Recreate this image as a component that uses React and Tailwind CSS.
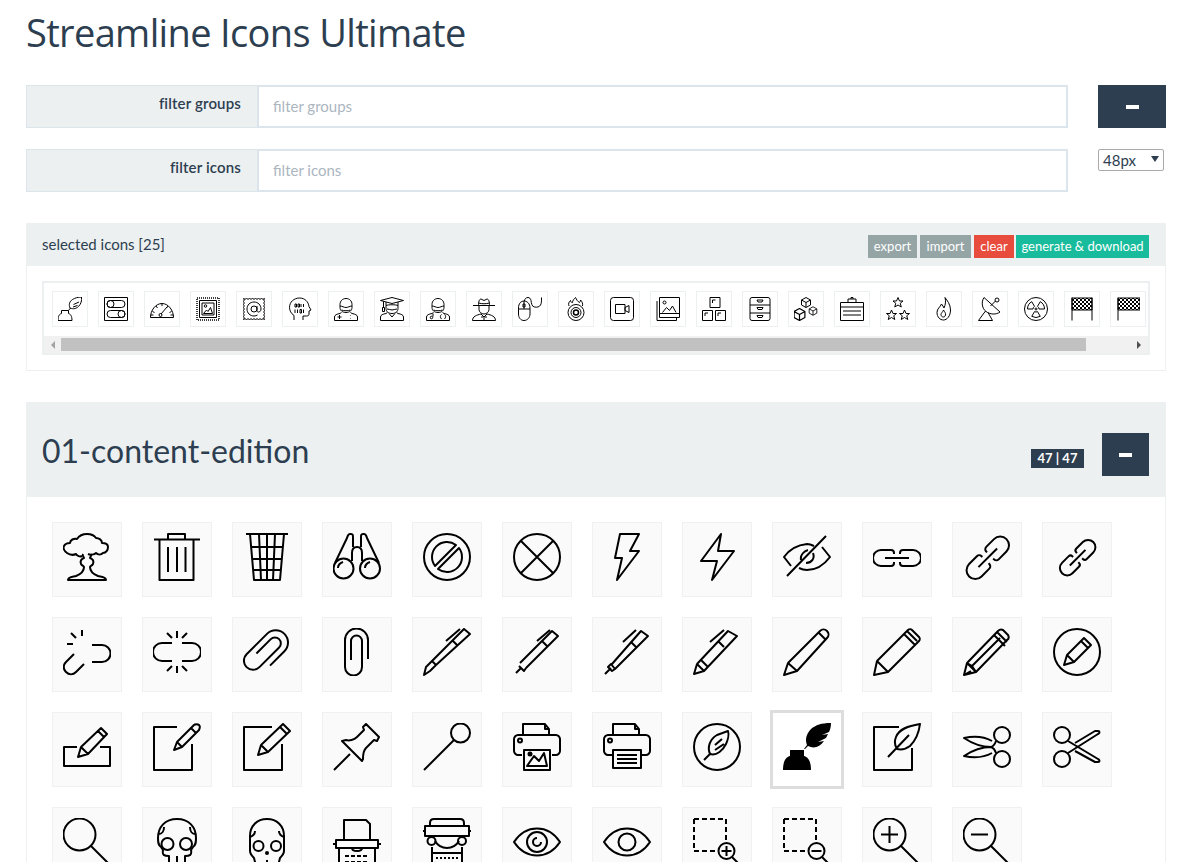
// Icon glyphs live in a 48x48 box, same drawings at 48px and 24px
const Glyph = ({ children, className }) => (
  <svg viewBox="0 0 48 48" fill="none" stroke="#000" strokeWidth="2" strokeLinecap="butt" strokeLinejoin="round" className={className}>
    {children}
  </svg>
)

const P = ({ d, ...rest }) => <path d={d} {...rest} />
const C = ({ x, y, r, ...rest }) => <circle cx={x} cy={y} r={r} {...rest} />

const linkBody = 'M21 21v-1a3 3 0 0 0-3-3H8a8 8 0 0 0 0 16h10a3 3 0 0 0 3-3v-1M27 21v-1a3 3 0 0 1 3-3h10a8 8 0 0 1 0 16H30a3 3 0 0 1-3-3v-1M12 25h24'
const clipBody = 'M35 31V12a11.5 11.5 0 0 0-23 0v27a8.5 8.5 0 0 0 17 0V13a5.5 5.5 0 0 0-11 0v19'
const eyeShape = 'M1 24C7 15 15 10.5 24 10.5S41 15 47 24c-6 9-14 13.5-23 13.5S7 33 1 24z'
const printerBase = 'M9 32H5c-2 0-4-2-4-4V16c0-2 2-4 4-4h38c2 0 4 2 4 4v12c0 2-2 4-4 4h-4M10 12V1h22l4 5v6M32 1v5h4'
const shoulders = 'M1 47v-7c0-4 5-6 11-7l3-2M47 47v-7c0-4-5-6-11-7l-3-2M1 47h46'
const faceOval = 'M24 3c-7 0-12 5-12 12v6c0 6 5 10 12 10s12-4 12-10v-6c0-7-5-12-12-12z'

function scallop() {
  let d = 'M3 3'
  for (let i = 0; i < 7; i++) d += 'q3 3 6 0'
  for (let i = 0; i < 7; i++) d += 'q-3 3 0 6'
  for (let i = 0; i < 7; i++) d += 'q-3 -3 -6 0'
  for (let i = 0; i < 7; i++) d += 'q3 -3 0 -6'
  return d + 'z'
}

const Star = ({ x, y }) => (
  <path transform={`translate(${x} ${y})`} d="M0-10l3 7h7l-5.500 4.500L6.500 9 0 5-6.500 9l2-7.500L-10-3h7z" />
)

const Cube = ({ x, y, s = 1 }) => (
  <g transform={`translate(${x} ${y}) scale(${s})`}>
    <path d="M0-10l9 5v10l-9 5-9-5V-5zM-9-5l9 5 9-5M0 0v10" />
  </g>
)

const Scene = () => (
  <path d="M14 43l7-10 5 5 5-8 3 13z" />
)

const selectedIcons = [
  <><P d="M7 27h14v6c4 1 7 5 7 14H0c0-9 3-13 7-14zM21 27l4-5" /><P d="M24 22c-3-7-1-13 5-17 5-3 11-5 18-5 1 7-1 14-6 19-4 4-10 6-17 3zM31 15l11-5M30 20l9-3" /></>,
  <><P d="M1 1h46v46H1zM13 7h22a7 7 0 0 1 0 14H13a7 7 0 0 1 0-14zM13 27h22a7 7 0 0 1 0 14H13a7 7 0 0 1 0-14z" /><C x="13" y="14" r="7" /><C x="35" y="34" r="7" /></>,
  <><P d="M1 41c0-14 10-28 23-28s23 14 23 28zM22 34l12-14M24 13v5M12 18l3 4M36 18l-3 4M5 29l4 2M43 29l-4 2M1 36h6M41 36h6" /><C x="21" y="36" r="3" /></>,
  <><P d="M2 2h44v44H2z" strokeDasharray="2 2" strokeWidth="3" /><P d="M7 7h34v34H7zM12 12h24v24H12z" /><C x="19" y="18" r="2.500" /><P d="M15 33l6-7 3 3 5-8 4 12z" /></>,
  <><P d={scallop()} /><C x="24" y="24" r="6" /><P d="M30 18v9c0 5 8 4 8-3 0-8-6-14-14-14s-14 6-14 14 6 14 14 14c3 0 5-1 7-2" /></>,
  <><P d="M12 46v-9C6 33 3 27 3 21 3 10 12 2 23 2s18 8 19 17l4 7-4 2v6c0 3-2 4-5 4h-7v8" /><P d="M14 14h3v6h-3zM20 14h3v6h-3zM26 14v6M31 14v6M14 25v7M19 25v7M24 25h3v7h-3zM31 25v7" /></>,
  <><P d={faceOval} /><P d="M12 18c4 0 8 3 12 3s8-3 12-3M15 26c5 2 13 2 18 0" /><P d={shoulders} /><P d="M11 36v8M7 40h8M33 37v1M33 42v1" /></>,
  <><P d="M1 7l23-6 23 6-23 6zM7 9v12M5 21h4v8H5zM12 10v7c4-2 20-2 24 0v-7" /><P d="M12 17v6c0 6 5 10 12 10s12-4 12-10v-6M14 24c4 0 7 2 10 2s6-2 10-2" /><P d={shoulders} /><P d="M18 33l6 7 6-7" /></>,
  <><P d={faceOval} /><P d="M12 18c4 0 8 3 12 3s8-3 12-3M15 26c5 2 13 2 18 0" /><P d={shoulders} /><C x="11" y="41" r="2.500" /><P d="M31 44c-3-3-3-7 0-9M37 44c3-3 3-7 0-9M14 33v6" /></>,
  <><P d="M2 17h44M13 17c0-6 1-13 5-13l6 3 6-3c4 0 5 7 5 13M13 12c7 2 15 2 22 0M14 17v8c0 5 5 9 10 9s10-4 10-9v-8" /><P d="M1 47c0-8 8-11 17-13l6 6 6-6c9 2 17 5 17 13zM24 40v7M18 40h4M26 40h4" /></>,
  <><P d="M1 22c0-9 5-14 11-14s12 5 12 14v12c0 7-5 13-12 13S1 41 1 34zM1 24h23M12 8v16M10 14h4v6h-4z" /><P d="M13 8c0-4 3-7 7-7 3 0 5 2 6 6 1 5 1 12 7 13 5 1 10 0 12-4 2-3 2-7 2-15" /></>,
  <><P d="M10 18c-2-5 0-8 3-11 0 3 2 4 4 4 0-4 3-7 6-10 2 4 4 8 8 10 1-1 2-3 2-5 3 3 5 7 4 12" /><C x="24" y="31" r="16" /><C x="24" y="31" r="10" /><C x="24" y="31" r="5" strokeWidth="3" /></>,
  <><P d="M7 1h34a6 6 0 0 1 6 6v34a6 6 0 0 1-6 6H7a6 6 0 0 1-6-6V7a6 6 0 0 1 6-6zM11 15h19v18H11zM30 21l8-4v14l-8-4z" /></>,
  <><P d="M7 1h40v40H7zM7 33h40M2 8v39h39v-6" /><C x="17" y="11" r="3" /><P d="M13 31l8-10 6 6 6-9 7 13" /></>,
  <><P d="M16 1h20v20H16zM1 27h20v20H1zM27 27h20v20H27zM21 12V6h6M6 38v-6h6M32 38v-6h6" /></>,
  <><P d="M8 1h32a4 4 0 0 1 4 4v38a4 4 0 0 1-4 4H8a4 4 0 0 1-4-4V5a4 4 0 0 1 4-4zM4 16h40M4 32h40M18 6h12l-2 4h-8zM18 21h12l-2 4h-8zM18 37h12l-2 4h-8z" /></>,
  <><Cube x={24} y={11} /><Cube x={11} y={35} s={1.200} /><Cube x={38} y={28} s={0.850} /></>,
  <><P d="M1 11h46v36H1zM16 11V4h16v7M22 4V1h4v3M1 20h46M6 28h36M6 36h36" /></>,
  <><Star x={24} y={11} /><Star x={11} y={36} /><Star x={37} y={36} /></>,
  <><P d="M26 1c4 6 11 13 11 25 0 12-7 20-14 20S10 40 10 31c0-8 6-10 9-17 2 3 4 5 5 8 3-6 4-14 2-21z" /><P d="M23 40c-3 0-5-2-5-5 0-3 3-4 5-9 2 4 5 6 4 10-1 3-2 4-4 4z" /></>,
  <><P d="M12 1c-6 9-4 22 4 28s20 7 28 1zM25 18l10-10M1 47l14-19M29 47L20 31M1 47h28" /><C x="38" y="6" r="4" /></>,
  <><C x="24" y="24" r="23" /><C x="24" y="24" r="2" /><P d="M27 18.800L32.500 9.300A17 17 0 0 1 41 24H30A6 6 0 0 0 27 18.800zM21 18.800L15.500 9.300A17 17 0 0 0 7 24H18A6 6 0 0 1 21 18.800zM27 29.200L32.500 38.700A17 17 0 0 1 15.500 38.700L21 29.200A6 6 0 0 0 27 29.200z" /></>,
  <><rect x="4" y="2" width="40" height="24" fill="url(#chk)" stroke="#000" /><P d="M4 1v46M44 1v46" /></>,
  <><rect x="4" y="2" width="44" height="24" fill="url(#chk)" stroke="#000" /><P d="M4 1v46" /></>,
]

const contentIcons = [
  // row 1
  <><P d="M19 23c-2 1-5 0-6-2-2 1-6 1-9-1-3-2-4-5-3-7 1-2 4-3 6-3 0-3 4-5 7-4 2-3 5-5 10-5s7 1 9 4c3 0 6 2 6 5 3 0 6 1 6 4s-2 6-5 6c-2 2-5 2-7 0-2 2-6 2-8 1" /><P d="M20 21c-1 2 1 3 1 4-3 1-4 3-3 6 1 2 3 2 3 3 0 4-3 7-8 9-4 1-8 1-8 4h38c0-3-4-3-8-4-5-2-8-5-8-9 0-1 2-1 3-3 1-3 0-5-3-6 0-1 2-2 1-4" /></>,
  <P d="M1 6.500h46M15 6.500V1h17v5.500M6.500 6.500V47h34V6.500M15 14v25M24 14v25M32.500 14v25" />,
  <P d="M3 1h42M7 1l4 46h26l4-46M16 1l2 46M24 1v46M32 1l-2 46M8 14h32M9 26h30M10 37h28" />,
  <><C x="10.500" y="35.500" r="10" /><C x="37" y="35.500" r="10" /><P d="M2 30L14 5c1-3 1-4 3-4h1c2 0 2 1 2 4v9M46 30L34 5c-1-3-1-4-3-4h-1c-2 0-2 1-2 4v9M19 28v-8c0-4 2-6 5-6s5 2 5 6v8M5 35c0-3 2-5 5-6M32 35c0-3 2-5 5-6" /></>,
  <><C x="24" y="24" r="23" /><P d="M12 33A15 15 0 0 1 33 12zM15 36A15 15 0 0 0 36 15z" /></>,
  <><C x="24" y="24" r="23" /><P d="M8 8l32 32M40 8L8 40" /></>,
  <P d="M17 1h19l-9 17h9L14 47l5-22h-7z" />,
  <P d="M28 1L8 28h16l-5 19 22-29H25z" />,
  <P d="M4 43L43 3M8 33l-7-9c5-7 13-12 23-13 3 0 5 1 7 2M39 14l8 10c-6 8-14 13-23 13-3 0-6-1-8-2M18 27c-1-5 3-9 7-10M30 20c2 5-1 10-7 10" />,
  <P d={linkBody} />,
  <g transform="translate(24 24) rotate(-45) scale(1.100) translate(-24 -24)" strokeWidth="1.800"><P d={linkBody} /></g>,
  <g transform="translate(24 24) rotate(-45) scale(0.920) translate(-24 -24)" strokeWidth="2.170"><P d={linkBody} /></g>,
  // row 2
  <P d="M11 26l-8 8c-3 3-3 7 0 10s7 3 10 0l8-8M29 17h10a8.500 8.500 0 0 1 0 17H29M19 2v6M8 5l5 5M4 16h6" />,
  <P d="M19 15H9a9 9 0 0 0 0 18h10M29 15h10a9 9 0 0 1 0 18H29M24 3v7M14 5l5 5M34 5l-5 5M24 38v7M14 43l5-5M34 43l-5-5" />,
  <g transform="translate(24 24) rotate(45) scale(1.070) translate(-24 -24)" strokeWidth="1.870"><P d={clipBody} /></g>,
  <P d={clipBody} />,
  <P d="M1 47l2-8 6-6 4 4-6 6zM9 33L41 1l6 5-34 31M30 13l5 5M23 13L37 1" />,
  <P d="M3 45l5-5M6 38l5 5 2-3M7 35L39 3l6 5L13 40M29 13l5 5M24 13L37 2" />,
  <P d="M2 46l6-6M5 39l4 4 3-2-4-5zM9 36L38 3l7 5L12 41M28 14l5 5M20 14L33 2" />,
  <P d="M1 46l3-10 7 7zM4 36L35 3l9 5L11 43M8 32l7 7M26 14l5 5M17 14L31 2" />,
  <P d="M1 47l4-12 9 8zM5 35L37 3c2-2 5-2 7 0s2 5 0 7L14 43M36 5l7 7" />,
  <P d="M1 47l3-14 11 11zM4 33L35 2c1-1 3-1 4 0l7 7c1 1 1 3 0 4L15 44M31 6l11 11M34 3l10 10" />,
  <P d="M1 47l3-12 9 9zM1 47l7-4M4 35L35 3c1-1 3-2 5-1l5 5c1 2 1 4-1 5L13 44M9 38l28-28M31 7l11 11M34 4l10 10M4 35l5 3 4 6" />,
  <><C x="24" y="24" r="23" /><P d="M11 37l3-10 7 7zM14 27l17-17 7 7-17 17M28 13l7 7" /></>,
  // row 3
  <P d="M14 24H1v19h46V24H37M15 34l3-10 7 7zM18 24L38 5l6 6-19 20M35 8l6 6" />,
  <P d="M24 4H1v43h38V21M21 27l3-8L41 2c1-1 4-1 5 0s1 3 0 5L29 24zM24 19l5 5M38 5l5 5" />,
  <P d="M29 4H1v43h38V21M15 32l3-10 7 7zM18 22L40 1l7 7-22 21M37 4l7 7" />,
  <P d="M1 47l16-16M9 18l20 20 1-2c0-4 0-8 3-11l8-8 3 1 2-4L33 1l-3 3 1 3-7 7c-3 3-8 4-11 3z" />,
  <><C x="37.500" y="10" r="9.500" /><P d="M1 47l30-30" /></>,
  <><P d={printerBase} /><C x="7" y="17.500" r="2" /><P d="M11 27h26v20H11z" /><C x="17" y="31" r="1.500" fill="#000" /><Scene /></>,
  <><P d={printerBase} /><C x="7" y="17.500" r="2" /><P d="M10 27h28v18H10zM14 32h20M14 36h20M14 40h20" /></>,
  <><C x="24" y="24" r="23" /><P d="M11 37l7-7M17 31c-3-7 0-15 7-19l11-4c1 3 0 9-2 13-3 6-9 12-16 10zM22 27l9-6M22 22l7-6" /></>,
  <>
    <path d="M7 27h14v6c4 1 7 5 7 14H0c0-9 3-13 7-14z" fill="#000" stroke="none" />
    <path d="M21 26l3-4c-2-5-1-11 4-16 5-4 10-6 20-6 0 4-1 7-2 9l-7 3 6-1-2 4-8 4 6-1c-4 6-10 8-16 5l-3 3z" fill="#000" stroke="none" />
  </>,
  <P d="M26 4H1v43h38V25M15 34l21-22M47 1C35 3 26 6 23 14c-2 5-1 9 1 12 4 1 9 0 13-3 5-5 9-14 10-22z" />,
  <><C x="39" y="12" r="8" /><C x="39" y="36" r="8" /><P d="M33 18c-1 3-2 5-5 6-9 0-18-3-27-9 9-2 19-2 28 3M33 30c-1-3-2-5-5-6-9 0-18 3-27 9 9 2 19 2 28-3" /></>,
  <><C x="9" y="12" r="8" /><C x="9" y="36" r="8" /><P d="M15 18l30 18c2 1 2 3 0 3h-3L22 28M15 30L45 11c2-1 2-3 0-3h-3L22 20" /></>,
  // row 4
  <><C x="16.500" y="16.500" r="16" /><P d="M28 28l19 19" /></>,
  <><P d="M24 1C12 1 5 9 5 20c0 4 0 7 3 9l2 3c-1 5 1 6 6 6v10M24 1c12 0 19 8 19 19 0 4 0 7-3 9l-2 3c1 5-1 6-6 6v10M24 38v10M6 16c3 0 5-3 5-7M42 16c-3 0-5-3-5-7" /><C x="14.500" y="26" r="6" /><C x="33" y="26" r="6" /></>,
  <><P d="M24 1c-10 0-17 7-17 17v15c0 3 2 5 4 7l2 8M24 1c10 0 17 7 17 17v15c0 3-2 5-4 7l-2 8M24 42v6M7 19c3-1 5-3 5-6M41 19c-3-1-5-3-5-6" /><C x="15.500" y="28" r="5" /><C x="33" y="28" r="5" /><C x="24" y="35" r="1" fill="#000" /></>,
  <><P d="M11 22V2h22l4 4v16M3 22h42v8H3zM0 26h3M45 26h3M6 30v18h36V30M19 30c0 2 2 3 5 3s5-1 5-3" /><P d="M12 38h24M12 44h24" strokeDasharray="4 2" /></>,
  <><P d="M7 8V5c0-3 2-4 4-4h26c2 0 4 1 4 4v3M2 8h44v10H2zM0 13h2M46 13h2M12 23c3 5 7 7 12 7s9-2 12-7M9 29v19h30V29M9 35h30" /><C x="8.500" y="23" r="4" /><C x="39" y="23" r="4" /><P d="M13 40h22M13 45h22" strokeDasharray="2 2" /></>,
  <><P d={eyeShape} /><C x="24" y="24" r="10" /><P d="M28 24a4 4 0 1 1-4-4" /></>,
  <><P d={eyeShape} /><C x="24" y="24" r="8.500" /></>,
  <><P d="M1 1h32v21M1 1v32h21" strokeDasharray="5 3" /><C x="33.500" y="33" r="8" /><P d="M33.500 28v10M28.500 33h10M39 39l8 8" /></>,
  <><P d="M1 1h32v21M1 1v32h21" strokeDasharray="5 3" /><C x="33.500" y="33" r="8" /><P d="M28.500 33h10M39 39l8 8" /></>,
  <><C x="16.500" y="16.500" r="16" /><P d="M16.500 8v17M8 16.500h17M28 28l19 19" /></>,
  <><C x="16.500" y="16.500" r="16" /><P d="M8 16.500h17M28 28l19 19" /></>,
]

const SELECTED_INDEX = 32

function FilterRow({ label, side }) {
  return (
    <div className="flex items-start">
      <div className="flex flex-1 h-[43px]">
        <label className="w-[231px] bg-[#ecf0f1] border border-r-0 border-[#dce4ec] text-right pr-4 pt-[7px] text-[15px] leading-5 tracking-[0.15px] font-semibold text-[#2c3e50]">
          {label}
        </label>
        <input
          placeholder={label}
          className="flex-1 min-w-0 border-2 border-[#dce4ec] bg-white px-[14px] text-[15px] text-[#2c3e50] placeholder:text-[#acb6c0] outline-none"
        />
      </div>
      <div className="w-[68px] ml-[30px]">{side}</div>
    </div>
  )
}

function Scrollbar() {
  return (
    <div className="flex items-center h-[17px] bg-[#f1f1f1]">
      <span className="w-[17px] flex justify-center">
        <span className="w-0 h-0 border-y-[4px] border-y-transparent border-r-[4px] border-r-[#a3a3a3]" />
      </span>
      <span className="w-[1025px] h-[13px] bg-[#c1c1c1]" />
      <span className="flex-1 flex justify-end pr-[7px]">
        <span className="w-0 h-0 border-y-[4px] border-y-transparent border-l-[4px] border-l-[#505050]" />
      </span>
    </div>
  )
}

export default function App() {
  return (
    <div className="h-[862px] overflow-hidden bg-white pl-[26px] pr-[32px] font-['Lato',sans-serif] text-[#2c3e50]">
      <svg width="0" height="0" className="absolute">
        <defs>
          <pattern id="chk" width="8" height="8" patternUnits="userSpaceOnUse">
            <rect width="8" height="8" fill="#fff" />
            <rect width="4" height="4" fill="#000" />
            <rect x="4" y="4" width="4" height="4" fill="#000" />
          </pattern>
        </defs>
      </svg>

      <h1 className="pt-[9px] h-[85px] text-[38px] leading-[47px] font-['Open_Sans',sans-serif] tracking-[-0.65px]">
        Streamline Icons Ultimate
      </h1>

      <div className="flex flex-col gap-[21px]">
        <FilterRow
          label="filter groups"
          side={
            <button className="w-full h-[43px] bg-[#2c3e50] flex items-center justify-center">
              <span className="w-[13px] h-[4px] bg-white" />
            </button>
          }
        />
        <FilterRow
          label="filter icons"
          side={
            <div className="w-[66px] h-[22px] border border-[#a9a9a9] rounded-[2px] bg-white flex items-center justify-between pl-[4px] pr-[4px] text-[15px]">
              <span>48px</span>
              <span className="w-0 h-0 border-x-[4px] border-x-transparent border-t-[6px] border-t-[#2c3e50] -mt-[2px]" />
            </div>
          }
        />
      </div>

      {/* selected icons */}
      <section className="mt-[31px] border border-[#ecf0f1]">
        <div className="h-[42px] bg-[#ecf0f1] flex items-center justify-between pl-[15px] pr-[16px]">
          <span className="text-[15px] -mt-[1px]">selected icons [25]</span>
          <div className="flex gap-[3px] text-[13px] leading-[23px] text-white mt-[3px]">
            <span className="w-[49px] text-center bg-[#95a5a6]">export</span>
            <span className="w-[51px] text-center bg-[#95a5a6]">import</span>
            <span className="w-[40px] text-center bg-[#e74c3c] -mr-[1px]">clear</span>
            <span className="w-[133px] text-center bg-[#18bc9c]">generate &amp; download</span>
          </div>
        </div>
        <div className="p-[15px]">
          <div className="border-2 border-[#ecf0f1]">
            <div className="flex gap-[10px] overflow-hidden pt-[8px] pb-[8px] pl-[8px] h-[53px]">
              {selectedIcons.map((icon, i) => (
                <div key={i} className="w-[36px] h-[36px] shrink-0 border border-[#ecf0f1] p-[5px]">
                  <Glyph className="w-6 h-6">{icon}</Glyph>
                </div>
              ))}
            </div>
            <Scrollbar />
          </div>
        </div>
      </section>

      {/* group */}
      <section className="mt-[31px] border border-[#ecf0f1]">
        <div className="h-[94px] bg-[#ecf0f1] flex items-center justify-between pl-[15px] pr-[16px]">
          <h2 className="text-[32px] leading-10 mt-[1px]">01-content-edition</h2>
          <div className="flex items-end gap-[18px] mt-[9px]">
            <span className="w-[53px] h-[19px] mb-[8px] bg-[#2c3e50] text-white text-[13px] font-bold leading-[19px] text-center">47 | 47</span>
            <button className="w-[47px] h-[43px] bg-[#2c3e50] flex items-center justify-center">
              <span className="w-[13px] h-[4px] bg-white" />
            </button>
          </div>
        </div>
        <div className="flex flex-wrap gap-x-5 gap-y-5 pt-[25px] pl-[25px]">
          {contentIcons.map((icon, i) =>
            i === SELECTED_INDEX ? (
              <div key={i} className="w-[74px] h-[79px] -m-[2px] border-[3px] border-[#dddddd] bg-white p-[10px]">
                <Glyph className="w-12 h-12">{icon}</Glyph>
              </div>
            ) : (
              <div key={i} className="w-[70px] h-[75px] border border-[#f0f0f0] bg-[#fafafa] p-[10px]">
                <Glyph className="w-12 h-12">{icon}</Glyph>
              </div>
            )
          )}
        </div>
      </section>
    </div>
  )
}
